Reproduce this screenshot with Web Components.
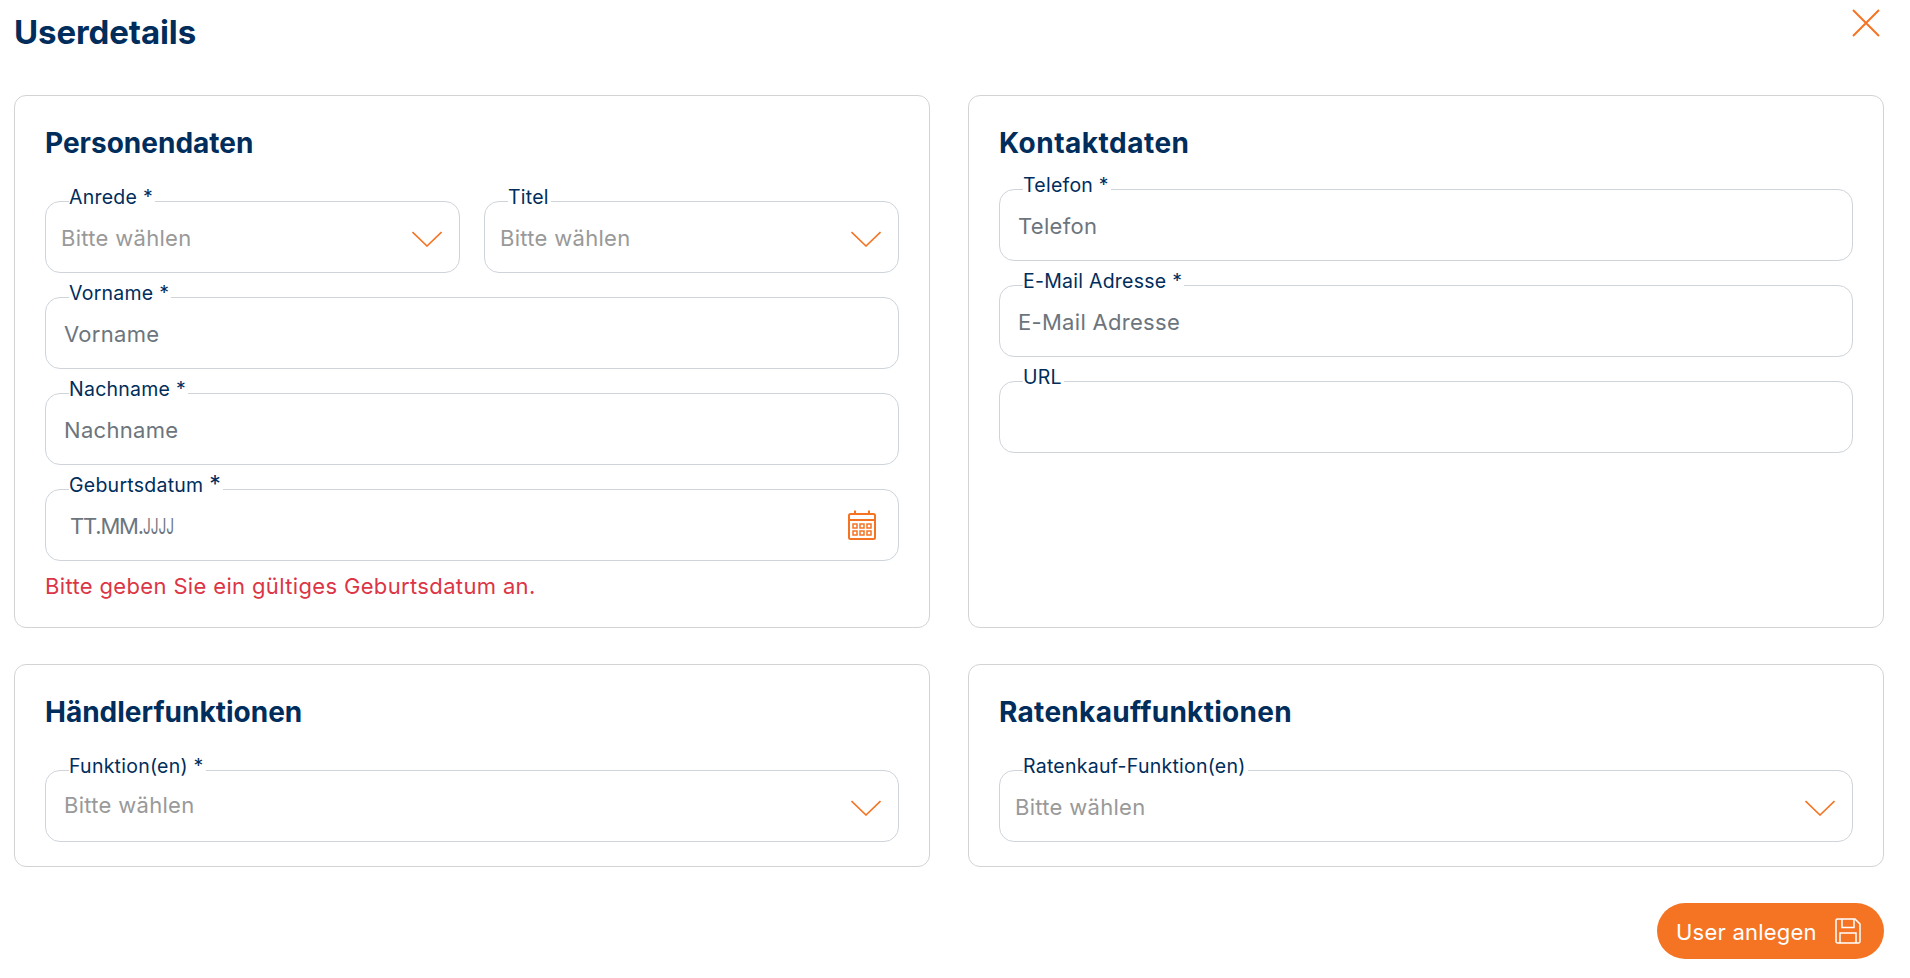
<!DOCTYPE html>
<html lang="de">
<head>
<meta charset="utf-8">
<title>Userdetails</title>
<style>
  html, body { margin: 0; background: #fff; }
  body { font-family: Inter, "Liberation Sans", sans-serif; color: #002d5b; }
  .row { display: grid; grid-template-columns: 916px 916px; column-gap: 38px; margin-left: 14px; }
  .row + .row { margin-top: 36px; }
</style>
</head>
<body>
<user-page>
  <span slot="title">Userdetails</span>
  <div class="row">
    <form-card heading="Personendaten" style="height:533px;--ls:0">
      <field-row>
        <form-field label="Anrede *" text="Bitte wählen" kind="select" inset="16"></form-field>
        <form-field label="Titel" text="Bitte wählen" kind="select" inset="16"></form-field>
      </field-row>
      <form-field label="Vorname *" text="Vorname" inset="19"></form-field>
      <form-field label="Nachname *" text="Nachname" inset="19"></form-field>
      <form-field label="Geburtsdatum *" text="TT.MM.JJJJ" kind="date" inset="25"></form-field>
      <error-text>Bitte geben Sie ein gültiges Geburtsdatum an.</error-text>
    </form-card>
    <form-card heading="Kontaktdaten" tight style="height:533px;--ls:.5px">
      <form-field label="Telefon *" text="Telefon" inset="19"></form-field>
      <form-field label="E-Mail Adresse *" text="E-Mail Adresse" inset="19"></form-field>
      <form-field label="URL" inset="19"></form-field>
    </form-card>
  </div>
  <div class="row">
    <form-card heading="Händlerfunktionen" style="height:203px;--ls:0">
      <form-field label="Funktion(en) *" text="Bitte wählen" kind="select" inset="19" raised></form-field>
    </form-card>
    <form-card heading="Ratenkauffunktionen" style="height:203px;--ls:.3px">
      <form-field label="Ratenkauf-Funktion(en)" text="Bitte wählen" kind="select" inset="16"></form-field>
    </form-card>
  </div>
  <save-button>User anlegen</save-button>
</user-page>

<script>
//page frame with title and close icon
class UserPage extends HTMLElement {
  constructor() {
    super();
    this.attachShadow({ mode: "open" }).innerHTML = `
      <style>
        :host { display: block; width: 1910px; height: 978px; overflow: hidden; position: relative; }
        header { height: 95px; padding-left: 14px; box-sizing: border-box; }
        h1 { margin: 0; padding-top: 10px; font-size: 33px; line-height: 44px; font-weight: 700; letter-spacing: -.1px; }
        svg { position: absolute; left: 1852px; top: 9px; }
      </style>
      <header><h1><slot name="title"></slot></h1></header>
      <svg width="28" height="28" viewBox="0 0 28 28" fill="none" stroke="#f47424" stroke-width="2"><path d="M1 1 27 27M27 1 1 27"/></svg>
      <slot></slot>`;
  }
}

//bordered section with a heading
class FormCard extends HTMLElement {
  constructor() {
    super();
    this.attachShadow({ mode: "open" }).innerHTML = `
      <style>
        :host { display: block; box-sizing: border-box; border: 1px solid #d3d3d3; border-radius: 12px; padding: 0 30px; background: #fff; }
        h2 { margin: 0; padding-top: 29px; height: 105px; box-sizing: border-box; font-size: 28px; line-height: 36px; font-weight: 700; letter-spacing: var(--ls, 0); }
        :host([tight]) h2 { height: 93px; }
        .body { display: flex; flex-direction: column; gap: 24px; }
      </style>
      <h2></h2>
      <div class="body"><slot></slot></div>`;
    this.shadowRoot.querySelector("h2").textContent = this.getAttribute("heading");
  }
}

//two fields next to each other
class FieldRow extends HTMLElement {
  constructor() {
    super();
    this.attachShadow({ mode: "open" }).innerHTML = `
      <style>:host { display: grid; grid-template-columns: 1fr 1fr; column-gap: 24px; }</style>
      <slot></slot>`;
  }
}

const chevron = `<svg width="30" height="16" viewBox="0 0 30 16" fill="none" stroke="#f47424" stroke-width="1.6"><path d="M.5 1 15 15 29.5 1"/></svg>`;
const calendar = `<svg width="28" height="30" viewBox="0 0 28 30" fill="none" stroke="#f47424" stroke-width="2"><rect x="1" y="4" width="26" height="25" rx="1.500"/><path d="M1 10H27M7 .5V4M21 .5V4"/><path stroke-width="1.500" d="M5 14h4v4h-4zM12 14h4v4h-4zM19 14h4v4h-4zM5 21h4v4h-4zM12 21h4v4h-4zM19 21h4v4h-4z"/></svg>`;

//input look with a label sitting on the top border
class FormField extends HTMLElement {
  constructor() {
    super();
    this.attachShadow({ mode: "open" }).innerHTML = `
      <style>
        :host { display: flex; align-items: center; justify-content: space-between; position: relative; box-sizing: border-box; height: 72px; border: 1px solid #ced4da; border-radius: 15px; padding-right: 17px; font-size: 22px; }
        label { position: absolute; left: 23px; top: -17px; padding-right: 2px; background: #fff; font-size: 19.5px; line-height: 24px; letter-spacing: .25px; color: #002d5b; white-space: nowrap; }
        label b { font-weight: 400; font-size: 23px; line-height: 0; }
        .text { color: #6c757d; letter-spacing: .3px; margin-top: 2px; }
        .text .date { letter-spacing: -1.2px; }
        .text i { display: inline-block; width: 31px; font-style: normal; letter-spacing: 0; transform: scaleX(.62); transform-origin: left; }
        :host([kind="select"]) .text { color: #999; }
        :host([raised]) .text { margin-top: -2px; }
        svg { display: block; margin-top: 4px; }
        :host([kind="date"]) { padding-right: 22px; }
        :host([kind="date"]) svg { margin-top: 0; }
      </style>
      <label></label><span class="text"></span>`;
    const kind = this.getAttribute("kind");
    const label = this.shadowRoot.querySelector("label");
    const text = this.shadowRoot.querySelector(".text");
    label.textContent = this.getAttribute("label");
    text.textContent = this.getAttribute("text") || "";
    text.style.marginLeft = (this.getAttribute("inset") || 13) - 1 + "px";
    if (kind === "date") {
      //the reference font has a narrow J and a bigger star here
      text.innerHTML = `<span class="date">TT.MM.</span><i>JJJJ</i>`;
      label.innerHTML = label.textContent.replace("*", "<b>*</b>");
    }
    if (kind === "select") this.shadowRoot.innerHTML += chevron;
    if (kind === "date") this.shadowRoot.innerHTML += calendar;
  }
}

//validation message under a field
class ErrorText extends HTMLElement {
  constructor() {
    super();
    this.attachShadow({ mode: "open" }).innerHTML = `
      <style>:host { display: block; margin-top: -14px; color: #dc3545; font-size: 22px; line-height: 30px; letter-spacing: .35px; }</style>
      <slot></slot>`;
  }
}

//orange save button at the bottom right
class SaveButton extends HTMLElement {
  constructor() {
    super();
    this.attachShadow({ mode: "open" }).innerHTML = `
      <style>
        :host { display: flex; width: 227px; height: 56px; margin: 36px 0 0 1657px; box-sizing: border-box; padding: 1px 23px 0 19px; align-items: center; justify-content: space-between; border-radius: 28px; background: #f47424; color: #fff; font-size: 22px; letter-spacing: .22px; }
        svg { margin-top: -1px; }
      </style>
      <slot></slot>
      <svg width="26" height="26" viewBox="0 0 26 26" fill="none" stroke="#fff" stroke-width="1.5"><path d="M2.500 1H20L25 6V23.500a1.500 1.500 0 0 1-1.500 1.500H2.500A1.500 1.500 0 0 1 1 23.500V2.500A1.500 1.500 0 0 1 2.500 1Z"/><path d="M7 1V9.500H19V1M5 25V15H21V25"/></svg>`;
  }
}

customElements.define("user-page", UserPage);
customElements.define("form-card", FormCard);
customElements.define("field-row", FieldRow);
customElements.define("form-field", FormField);
customElements.define("error-text", ErrorText);
customElements.define("save-button", SaveButton);
</script>
</body>
</html>
